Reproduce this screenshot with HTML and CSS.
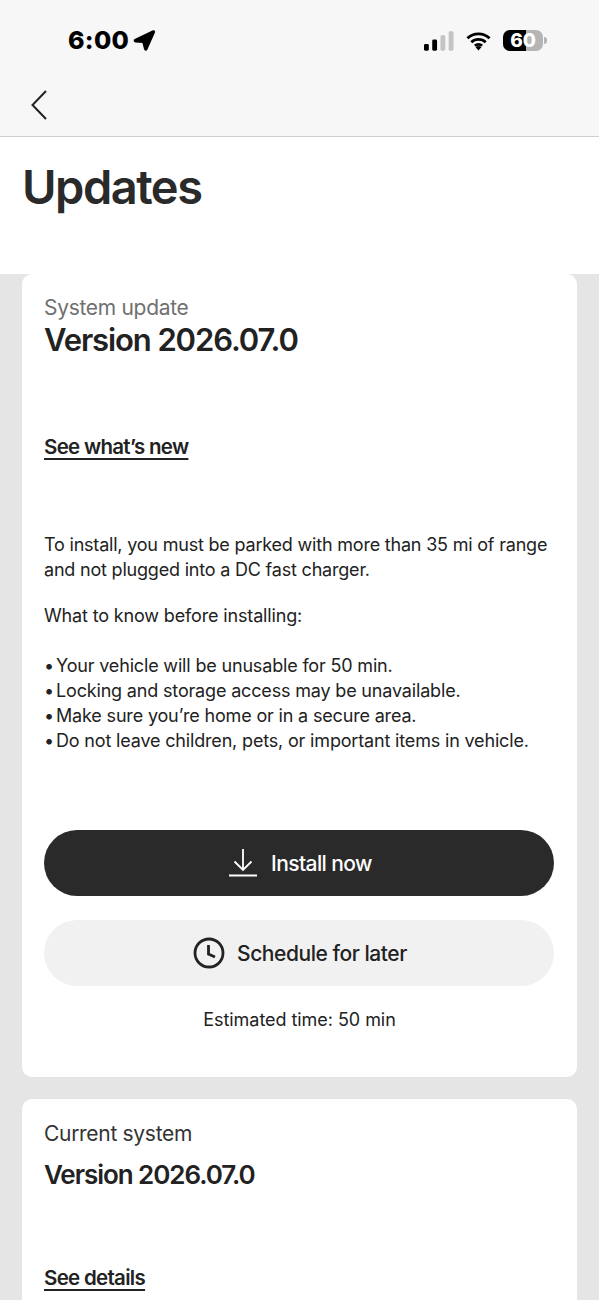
FILE: index.html
```html
<!DOCTYPE html>
<html lang="en">
<head>
<meta charset="utf-8">
<title>Updates</title>
<link rel="stylesheet" href="styles.css">
</head>
<body>
<div class="page">
  <header class="topbar">
    <div class="status">
      <div class="status-left">
        <span class="time">6:00</span>
        <svg class="loc" viewBox="0 0 22 22"><path d="M2 10.500 19.500 2.200c.5-.2.800.2.600.7L12.800 19.500c-.3.600-1 .5-1.200-.1L9.800 12.500 2.300 11.800c-.7-.1-.9-1-.3-1.300Z"/></svg>
      </div>
      <div class="status-right">
        <svg class="signal" viewBox="0 0 31 20"><rect x="0" y="13" width="5" height="7" rx="1.500" fill="#000"/><rect x="8.500" y="8.500" width="5" height="11.500" rx="1.500" fill="#000"/><rect x="17" y="4" width="5" height="16" rx="1.500" fill="#c4c4c4"/><rect x="25.500" y="0" width="5" height="20" rx="1.500" fill="#c4c4c4"/></svg>
        <svg class="wifi" viewBox="0 0 26 20"><path d="M1.500 7.200a16.500 16.500 0 0 1 23 0M5.500 11.300a11 11 0 0 1 15 0M9.300 15a5.500 5.500 0 0 1 7.400 0" fill="none" stroke="#000" stroke-width="3"/><path d="m13 20-3-3.500a4.500 4.500 0 0 1 6 0Z" fill="#000"/></svg>
        <div class="battery"><span class="batt-fill"></span><span class="batt-num">60</span></div>
        <span class="batt-cap"></span>
      </div>
    </div>
    <div class="navrow">
      <svg class="back" viewBox="0 0 16 30"><path d="M15 1 1.500 15 15 29" fill="none" stroke="#222" stroke-width="2"/></svg>
    </div>
  </header>
  <div class="title-wrap"><h1>Updates</h1></div>
  <main class="content">
    <section class="card main-card">
      <p class="eyebrow">System update</p>
      <h2 class="version">Version 2026.07.0</h2>
      <a class="link new-link">See what’s new</a>
      <p class="body first">To install, you must be parked with more than 35 mi of range and not plugged into a DC fast charger.</p>
      <p class="body know">What to know before installing:</p>
      <ul class="list">
        <li><span class="dot">•</span><span>Your vehicle will be unusable for 50 min.</span></li>
        <li><span class="dot">•</span><span>Locking and storage access may be unavailable.</span></li>
        <li><span class="dot">•</span><span>Make sure you’re home or in a secure area.</span></li>
        <li><span class="dot">•</span><span>Do not leave children, pets, or important items in vehicle.</span></li>
      </ul>
      <button class="btn btn-dark">
        <svg class="ico-dl" viewBox="0 0 28 28"><path d="M14 0v21M5.500 12.500 14 21l8.500-8.500M0 26.500h28" fill="none" stroke="#fff" stroke-width="1.800"/></svg>
        <span>Install now</span>
      </button>
      <button class="btn btn-light">
        <svg class="ico-clock" viewBox="0 0 32 32"><circle cx="16" cy="16" r="14" fill="none" stroke="#222" stroke-width="2.800"/><path d="M15.500 8v9l6.500 3" fill="none" stroke="#222" stroke-width="2.800"/></svg>
        <span>Schedule for later</span>
      </button>
      <p class="estimate">Estimated time: 50 min</p>
    </section>
    <section class="card second-card">
      <p class="eyebrow dark">Current system</p>
      <h2 class="version small">Version 2026.07.0</h2>
      <a class="link details-link">See details</a>
    </section>
  </main>
</div>
</body>
</html>
```
FILE: styles.css
```css
* { box-sizing: border-box; }
html, body { margin: 0; padding: 0; }
body { font-family: Inter, "Liberation Sans", sans-serif; color: #222; background: #fff; }
.page { width: 599px; height: 1300px; overflow: hidden; display: flex; flex-direction: column; }

.topbar { height: 137px; flex: none; background: #f7f7f7; border-bottom: 1px solid #cfcfcf; }
.status { height: 80px; padding: 27px 52px 0 68px; display: flex; justify-content: space-between; align-items: flex-start; }
.status-left { display: flex; align-items: center; gap: 4px; }
.time { font-size: 25px; line-height: 26px; font-weight: 800; color: #000; letter-spacing: 0.3px; }
.loc { width: 23px; height: 23px; fill: #000; stroke: #000; stroke-width: 2px; stroke-linejoin: round; }
.status-right { display: flex; align-items: center; padding-top: 3px; }
.signal { width: 30px; height: 20px; }
.wifi { width: 25px; height: 20px; margin-left: 12px; }
.battery { position: relative; width: 40px; height: 21px; margin-left: 12px; border-radius: 7px; background: #b5b5b5; overflow: hidden; display: flex; align-items: center; justify-content: center; }
.batt-fill { position: absolute; left: 0; top: 0; bottom: 0; width: 58%; background: #000; }
.batt-num { position: relative; color: #fff; font-size: 19px; line-height: 20px; font-weight: 800; }
.batt-cap { width: 3px; height: 7px; margin-left: 1px; background: #b5b5b5; border-radius: 0 3px 3px 0; }
.navrow { padding: 10px 0 0 31px; }
.back { display: block; width: 16px; height: 30px; }

.title-wrap { height: 137px; flex: none; padding: 23px 0 0 22px; }
h1 { margin: 0; font-size: 47px; line-height: 54px; font-weight: 600; letter-spacing: -1.5px; color: #2a2a2a; }

.content { flex: 1; background: #e5e5e5; padding: 0 22px; display: flex; flex-direction: column; gap: 22px; }
.card { background: #fff; border-radius: 10px; padding: 0 22px; flex: none; }
.main-card { height: 803px; padding-top: 21px; }
.second-card { padding-top: 22px; height: 260px; }

.eyebrow { margin: 0; font-size: 21px; line-height: 26px; color: #707070; letter-spacing: -0.3px; }
.eyebrow.dark { color: #333; }
.version { margin: 0; font-size: 31px; line-height: 38px; font-weight: 600; letter-spacing: -1.1px; color: #222; }
.version.small { font-size: 26px; line-height: 34px; margin-top: 11px; letter-spacing: -1.05px; }
.link { display: inline-block; font-size: 20.5px; line-height: 26px; font-weight: 600; color: #222; letter-spacing: -0.7px; text-decoration: underline; text-underline-offset: 4px; text-decoration-thickness: 2px; }
.new-link { margin-top: 75px; }
.details-link { margin-top: 73px; }

.body { margin: 0; font-size: 18px; line-height: 25px; color: #222; letter-spacing: -0.2px; }
.first { margin-top: 72px; }
.know { margin-top: 21px; letter-spacing: -0.15px; }
.list { list-style: none; margin: 25px 0 0; padding: 0; font-size: 18px; line-height: 25px; letter-spacing: -0.17px; }
.list li { display: flex; }
.dot { flex: none; width: 12px; }

.btn { width: 510px; height: 66px; border: 0; border-radius: 33px; display: flex; align-items: center; justify-content: center; font-family: inherit; font-size: 21px; font-weight: 500; letter-spacing: -0.6px; }
.btn-dark { margin-top: 77px; background: #2a2a2a; color: #fff; gap: 14px; padding: 0 0 0 3px; }
.btn-light { margin-top: 24px; background: #f1f1f1; color: #222; gap: 12px; letter-spacing: -0.45px; padding: 0 0 0 2px; }
.ico-dl { width: 28px; height: 28px; }
.ico-clock { width: 32px; height: 32px; }
.estimate { margin: 21px 0 0; text-align: center; font-size: 18px; line-height: 26px; color: #222; letter-spacing: -0.05px; }
```
